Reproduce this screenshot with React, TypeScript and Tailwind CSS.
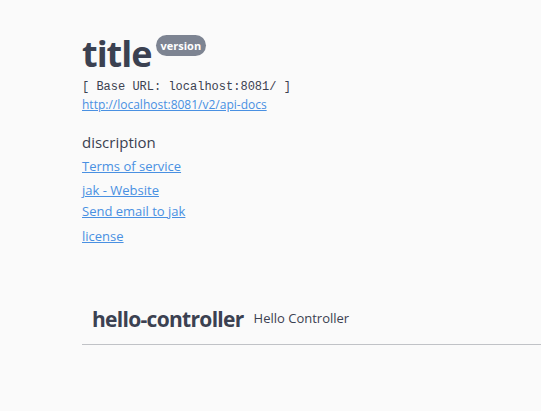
export default function App() {
  const font = { fontFamily: '"Open Sans", sans-serif' }
  return (
    <div className="min-h-screen bg-[#fafafa] text-[#3b4151] overflow-hidden" style={font}>
      <div className="pl-[82px] pt-[33px]">
        <div className="flex items-start">
          <h2 className="text-[36px] font-bold leading-[42px] tracking-[-1px] m-0">title</h2>
          <span className="ml-[4px] mt-[2px] rounded-full bg-[#7d8492] px-[5px] py-[3px] text-[11px] font-bold leading-[15px] text-white">version</span>
        </div>
        <pre className="mt-[4px] text-[12px] leading-[16px] text-[#3b4151]" style={{ fontFamily: '"Liberation Mono", monospace' }}>
          [ Base URL: localhost:8081/ ]
        </pre>
        <a href="#" className="mt-[2px] block w-fit text-[12px] leading-[16px] text-[#4990e2] underline">
          http://localhost:8081/v2/api-docs
        </a>
        <p className="mt-[19px] text-[15px] leading-[20px]">discription</p>
        <a href="#" className="mt-[5px] block w-fit text-[13px] leading-[18px] text-[#4990e2] underline">Terms of service</a>
        <a href="#" className="mt-[6px] block w-fit text-[13px] leading-[18px] text-[#4990e2] underline">jak - Website</a>
        <a href="#" className="mt-[3px] block w-fit text-[13px] leading-[18px] text-[#4990e2] underline">Send email to jak</a>
        <a href="#" className="mt-[7px] block w-fit text-[13px] leading-[18px] text-[#4990e2] underline">license</a>
        <div className="mt-[51px] flex items-center border-b border-[#3b4151]/30 pl-[10px] pb-[12px] pt-[10px]">
          <h4 className="text-[21px] font-bold leading-[26px] tracking-[-0.7px]">hello-controller</h4>
          <small className="pl-[10px] text-[13px]">Hello Controller</small>
        </div>
      </div>
    </div>
  )
}
